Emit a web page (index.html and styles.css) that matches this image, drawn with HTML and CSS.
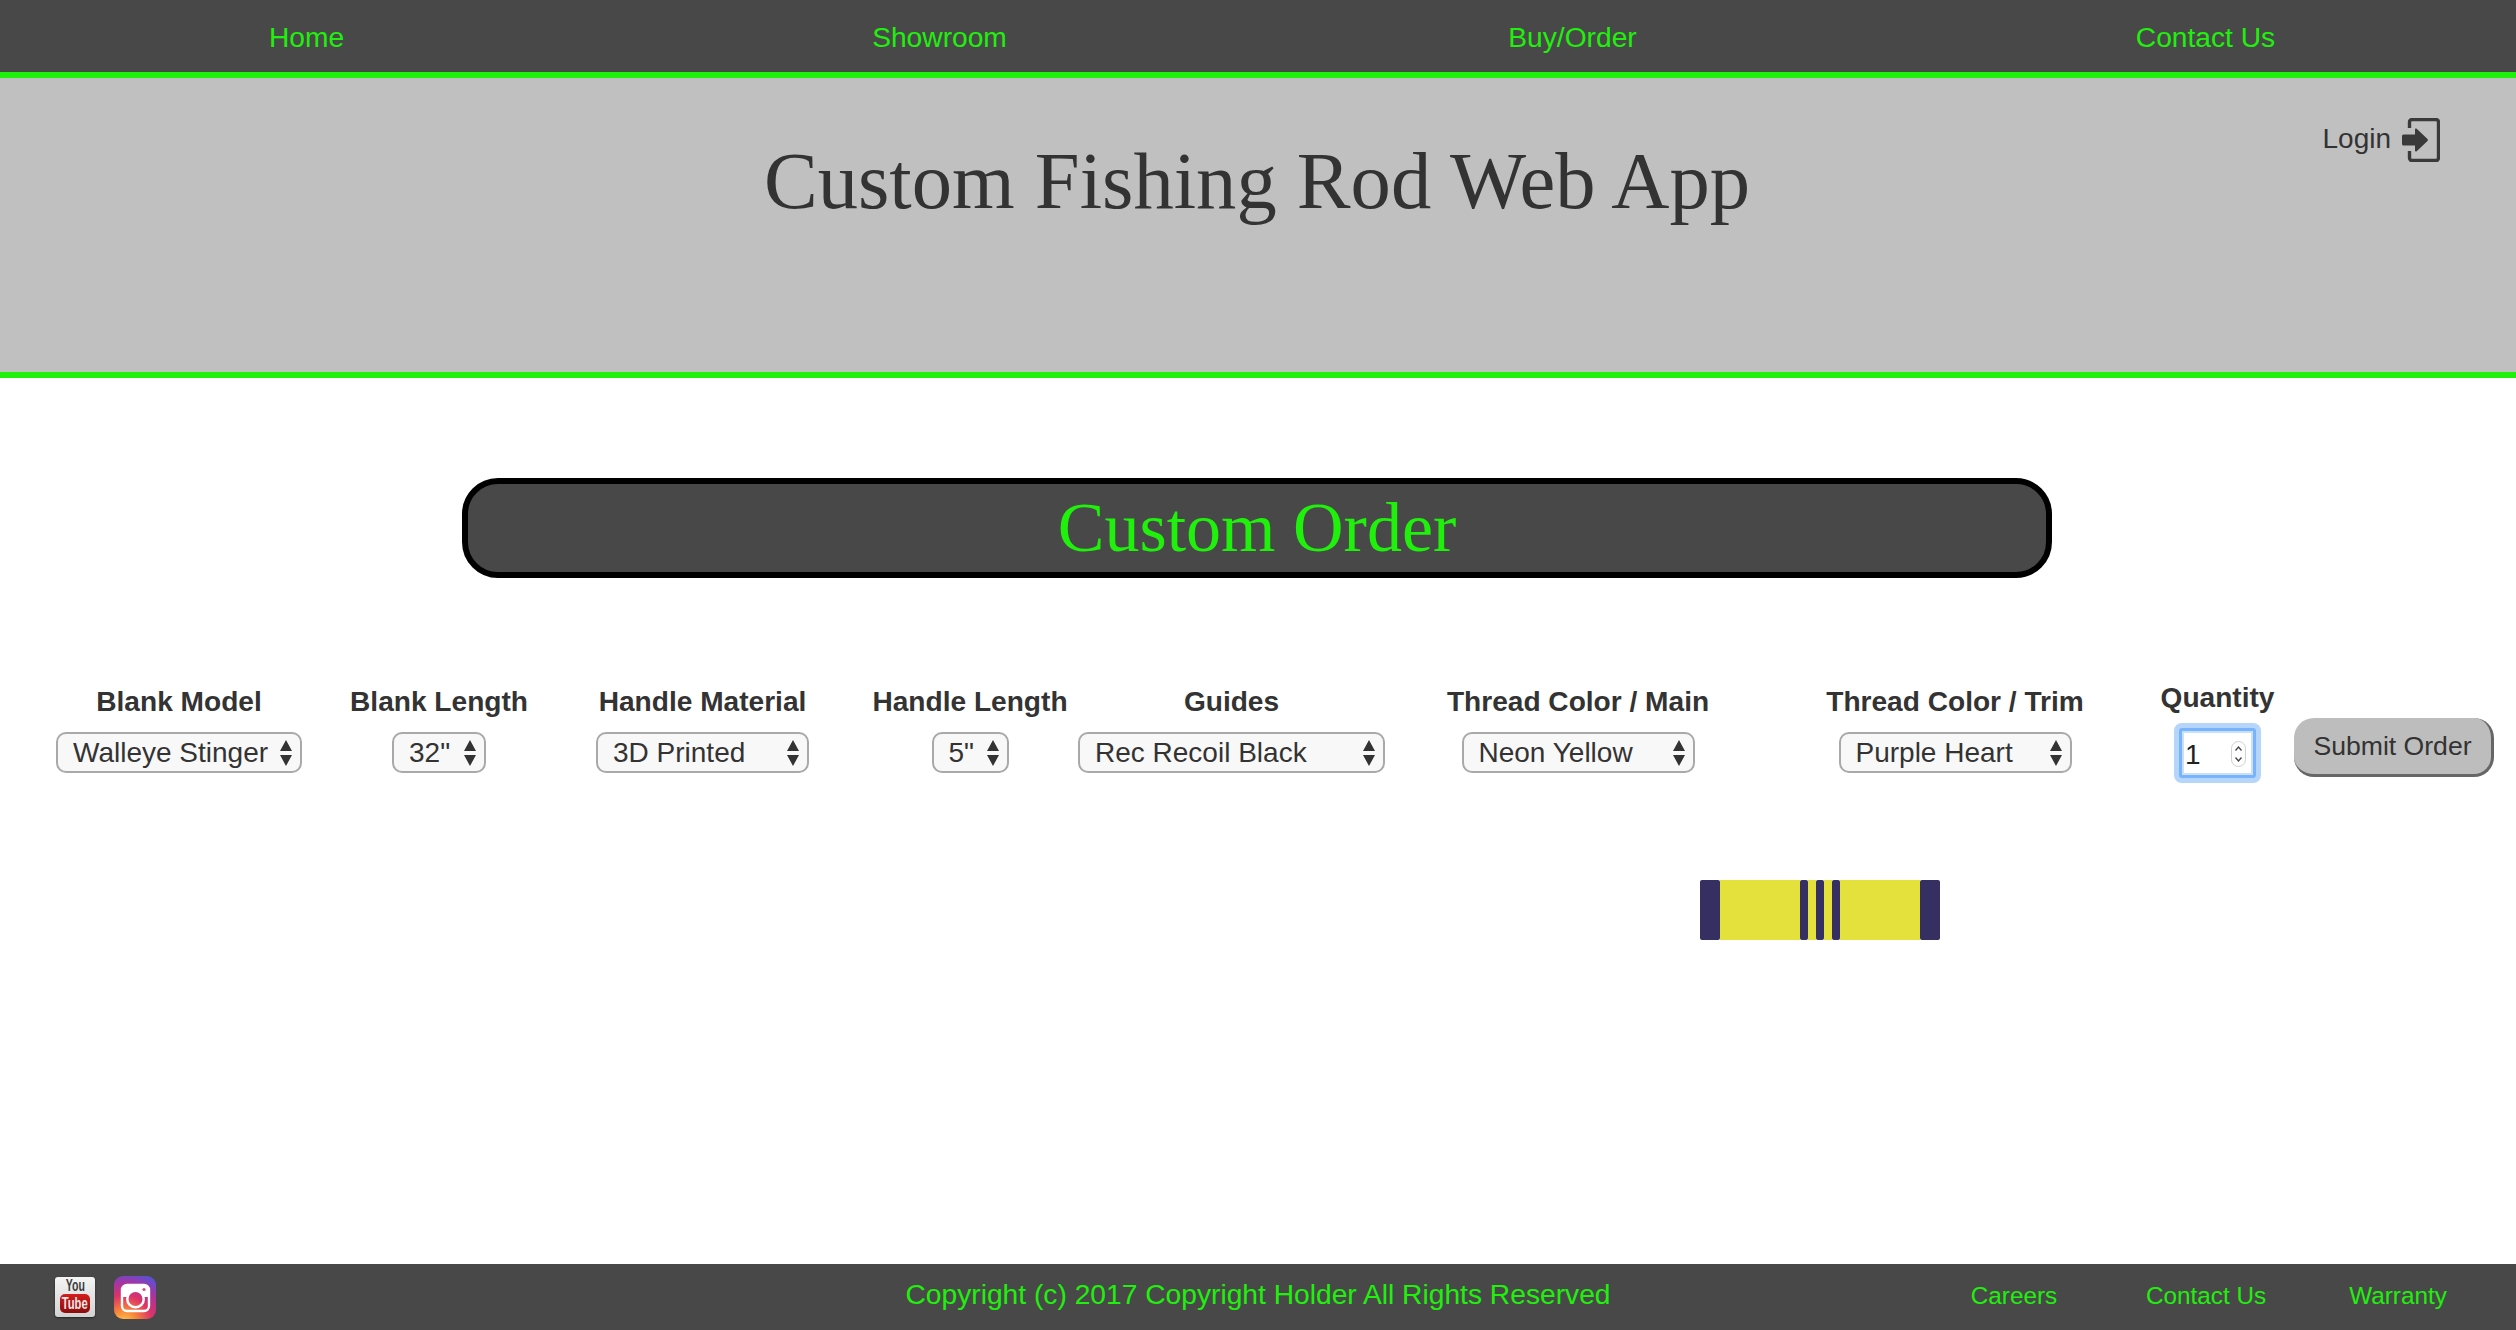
FILE: index.html
```html
<!DOCTYPE html>
<html lang="en">

<head>
    <meta charset="UTF-8">
    <title>Custom Fishing Rod Web App</title>
    <link rel="stylesheet" href="styles.css">
</head>

<body>

    <nav class="topnav">
        <a href="#">Home</a>
        <a href="#">Showroom</a>
        <a href="#">Buy/Order</a>
        <a href="#">Contact Us</a>
    </nav>

    <header class="banner">
        <h1>Custom Fishing Rod Web App</h1>
        <a class="login" href="#">
            Login
            <svg width="38" height="44" viewBox="0 0 38 44">
                <path d="M7.5 10V4a2.5 2.5 0 0 1 2.5-2.5h24a2.5 2.5 0 0 1 2.5 2.5v36a2.5 2.5 0 0 1-2.5 2.5H10A2.5 2.5 0 0 1 7.5 40v-7" fill="none" stroke="#3a3a3a" stroke-width="3.4"/>
                <path d="M1.5 16.5H13V11.5a1 1 0 0 1 1.7-.7L25.5 21a1.4 1.4 0 0 1 0 2L14.7 33.2a1 1 0 0 1-1.7-.7V27.5H1.5A1.5 1.5 0 0 1 0 26v-8a1.5 1.5 0 0 1 1.5-1.5z" fill="#3a3a3a"/>
            </svg>
        </a>
    </header>

    <main class="content">
        <h2 class="order-title">Custom Order</h2>

        <form class="order-form">
            <div class="field f1">
                <label for="model">Blank Model</label>
                <span class="pick w246">
                    <select id="model"><option>Walleye Stinger</option></select>
                    <svg class="updown" width="14" height="26" viewBox="0 0 14 26"><path d="M7 0l6 11H1zM7 26L1 15h12z"/></svg>
                </span>
            </div>
            <div class="field f2">
                <label for="blen">Blank Length</label>
                <span class="pick w94">
                    <select id="blen"><option>32"</option></select>
                    <svg class="updown" width="14" height="26" viewBox="0 0 14 26"><path d="M7 0l6 11H1zM7 26L1 15h12z"/></svg>
                </span>
            </div>
            <div class="field f3">
                <label for="hmat">Handle Material</label>
                <span class="pick w213">
                    <select id="hmat"><option>3D Printed</option></select>
                    <svg class="updown" width="14" height="26" viewBox="0 0 14 26"><path d="M7 0l6 11H1zM7 26L1 15h12z"/></svg>
                </span>
            </div>
            <div class="field f4">
                <label for="hlen">Handle Length</label>
                <span class="pick w77">
                    <select id="hlen"><option>5"</option></select>
                    <svg class="updown" width="14" height="26" viewBox="0 0 14 26"><path d="M7 0l6 11H1zM7 26L1 15h12z"/></svg>
                </span>
            </div>
            <div class="field f5">
                <label for="guides">Guides</label>
                <span class="pick w307">
                    <select id="guides"><option>Rec Recoil Black</option></select>
                    <svg class="updown" width="14" height="26" viewBox="0 0 14 26"><path d="M7 0l6 11H1zM7 26L1 15h12z"/></svg>
                </span>
            </div>
            <div class="field f6">
                <label for="tmain">Thread Color / Main</label>
                <span class="pick w233">
                    <select id="tmain"><option>Neon Yellow</option></select>
                    <svg class="updown" width="14" height="26" viewBox="0 0 14 26"><path d="M7 0l6 11H1zM7 26L1 15h12z"/></svg>
                </span>
            </div>
            <div class="field f7">
                <label for="ttrim">Thread Color / Trim</label>
                <span class="pick w233">
                    <select id="ttrim"><option>Purple Heart</option></select>
                    <svg class="updown" width="14" height="26" viewBox="0 0 14 26"><path d="M7 0l6 11H1zM7 26L1 15h12z"/></svg>
                </span>
            </div>
            <div class="field f8 qty-field">
                <label for="qty">Quantity</label>
                <span class="qty">
                    <input id="qty" type="text" value="1">
                    <svg class="stepper" width="15" height="26" viewBox="0 0 15 26">
                        <rect x=".5" y=".5" width="14" height="25" rx="7" fill="#fff" stroke="#cfcfcf"/>
                        <path d="M4.5 9.5L7.5 6l3 3.5M4.5 16.5l3 3.5 3-3.5" fill="none" stroke="#444" stroke-width="1.3"/>
                    </svg>
                </span>
            </div>
            <button class="submit" type="button">Submit Order</button>
        </form>

        <div class="swatch">
            <span class="navy wide"></span>
            <span class="yellow long"></span>
            <span class="navy"></span>
            <span class="yellow"></span>
            <span class="navy"></span>
            <span class="yellow"></span>
            <span class="navy"></span>
            <span class="yellow long"></span>
            <span class="navy wide"></span>
        </div>
    </main>

    <footer class="foot">
        <div class="social">
            <a class="yt" href="#">
                <span class="yt-you">You</span>
                <span class="yt-tube"><span>Tube</span></span>
            </a>
            <svg class="ig" width="42" height="43" viewBox="0 0 42 43">
                <defs>
                    <radialGradient id="igbg" gradientUnits="userSpaceOnUse" cx="10" cy="48" r="52">
                        <stop offset="0" stop-color="#fdd25a"/>
                        <stop offset="0.25" stop-color="#f88a38"/>
                        <stop offset="0.55" stop-color="#dc3268"/>
                        <stop offset="0.8" stop-color="#a534a4"/>
                        <stop offset="1" stop-color="#5f4fd0"/>
                    </radialGradient>
                </defs>
                <rect width="42" height="43" rx="9" fill="url(#igbg)"/>
                <rect x="8" y="9" width="27" height="26" rx="5" fill="none" stroke="#fff" stroke-width="2.4"/>
                <path d="M8 21v-7a5 5 0 0 1 5-5h17a5 5 0 0 1 5 5v7z" fill="#fff"/>
                <circle cx="21.5" cy="23" r="9.5" fill="#fff"/>
                <circle cx="21.5" cy="23" r="7" fill="url(#igbg)"/>
                <circle cx="30" cy="13.5" r="1.6" fill="#d84a80"/>
            </svg>
        </div>
        <p class="copy">Copyright (c) 2017 Copyright Holder All Rights Reserved</p>
        <div class="foot-links">
            <a href="#">Careers</a>
            <a href="#">Contact Us</a>
            <a href="#">Warranty</a>
        </div>
    </footer>

</body>

</html>
```

FILE: styles.css
```css
* {
    box-sizing: border-box;
}

body {
    margin: 0;
    height: 1330px;
    display: flex;
    flex-direction: column;
    overflow: hidden;
    font-family: "Liberation Sans", Arial, sans-serif;
    color: #333;
    background-color: #fff;
}

a {
    text-decoration: none;
}

.topnav {
    height: 78px;
    flex: none;
    display: grid;
    grid-template-columns: repeat(4, 633px);
    margin-left: -10px;
    margin-right: -6px;
    background-color: #484848;
    border-bottom: 6px solid #1ff00c;
}

.topnav a {
    text-align: center;
    line-height: 75px;
    font-size: 28.2px;
    color: #1ff00c;
}

.banner {
    height: 300px;
    flex: none;
    position: relative;
    background-color: #c0c0c0;
    border-bottom: 6px solid #1ff00c;
}

.banner h1 {
    margin: 0;
    padding: 59px 2px 0 0;
    text-align: center;
    font-family: "Liberation Serif", "Times New Roman", serif;
    font-weight: normal;
    font-size: 80.6px;
    line-height: 88px;
    color: #333;
}

.login {
    position: absolute;
    top: 38px;
    right: 76px;
    display: flex;
    align-items: center;
    gap: 11px;
    line-height: 40px;
    font-size: 28px;
    color: #333;
}

.login svg {
    margin-top: 2px;
}

.content {
    flex: 1;
}

.order-title {
    width: 1590px;
    height: 100px;
    margin: 100px 0 0 462px;
    text-align: center;
    font-family: "Liberation Serif", "Times New Roman", serif;
    font-weight: normal;
    font-size: 70px;
    line-height: 88px;
    color: #1ff00c;
    background-color: #484848;
    border: 6px solid #000;
    border-radius: 36px;
}

.order-form {
    display: flex;
    align-items: flex-start;
    margin-top: 105px;
    padding-left: 56px;
}

.field {
    display: flex;
    flex-direction: column;
    align-items: center;
}

.field label {
    height: 49px;
    line-height: 37px;
    white-space: nowrap;
    font-size: 28.1px;
    font-weight: bold;
    color: #333;
}

.f1 { width: 246px; }
.f2 { width: 176px; margin-left: 49px; }
.f3 { width: 213px; margin-left: 69px; }
.f4 { width: 194px; margin-left: 64px; }
.f5 { width: 307px; margin-left: 11px; }
.f6 { width: 266px; margin-left: 60px; }
.f7 { width: 256px; margin-left: 116px; }
.f8 { width: 111px; margin-left: 79px; }

.pick {
    position: relative;
    display: block;
    height: 41px;
}

.w246 { width: 246px; }
.w94 { width: 94px; }
.w213 { width: 213px; }
.w77 { width: 77px; }
.w307 { width: 307px; }
.w233 { width: 233px; }

.pick select {
    appearance: none;
    width: 100%;
    height: 100%;
    padding: 0 0 0 15px;
    font-family: "Liberation Sans", Arial, sans-serif;
    font-size: 28px;
    color: #333;
    background-color: #f8f8f8;
    border: 2px solid #a9a9a9;
    border-radius: 10px;
}

.updown {
    position: absolute;
    top: 8px;
    right: 9px;
    fill: #333;
}

.qty-field label {
    margin-top: -4px;
}

.qty {
    position: relative;
    display: block;
    width: 77px;
    height: 50px;
}

.qty input {
    width: 100%;
    height: 100%;
    padding: 3px 0 0 3px;
    font-family: "Liberation Sans", Arial, sans-serif;
    font-size: 28px;
    color: #222;
    background-color: #fff;
    border: 3px solid #78b4fb;
    border-radius: 3px;
    outline: none;
    box-shadow: 0 0 0 5px #b5d5fb, inset 0 0 0 2px #c8e0fc;
}

.stepper {
    position: absolute;
    top: 13px;
    right: 10px;
}

.submit {
    width: 200px;
    height: 59px;
    margin-top: 35px;
    margin-left: 21px;
    padding: 0;
    font-family: "Liberation Sans", Arial, sans-serif;
    font-size: 26.6px;
    color: #333;
    background-color: #bdbdbd;
    border: none;
    border-right: 3px solid #666;
    border-bottom: 3px solid #666;
    border-radius: 20px;
}

.swatch {
    display: flex;
    width: 240px;
    height: 60px;
    margin: 102px 0 0 1700px;
}

.swatch span {
    width: 8px;
}

.swatch .navy {
    background-color: #353061;
    border-radius: 2px;
}

.swatch .yellow {
    background-color: #e4e13d;
}

.swatch .wide {
    width: 20px;
}

.swatch .long {
    width: 80px;
}

.foot {
    height: 66px;
    flex: none;
    display: grid;
    grid-template-columns: 1fr auto 1fr;
    align-items: center;
    color: #1ff00c;
    background-color: #484848;
}

.social {
    display: flex;
    align-items: center;
    gap: 19px;
    padding-left: 55px;
}

.yt {
    width: 40px;
    height: 40px;
    display: flex;
    flex-direction: column;
    align-items: center;
    background: linear-gradient(#f4f4f4, #d2d2d2);
    border-radius: 3px;
    box-shadow: 0 1px 2px #222;
    font-weight: bold;
    font-size: 17px;
}

.yt-you {
    flex: none;
    height: 17px;
    line-height: 18px;
    color: #3c3c3c;
    transform: scaleX(0.62);
}

.yt-tube {
    width: 30px;
    height: 19px;
    display: flex;
    justify-content: center;
    line-height: 19px;
    color: #f2e6e6;
    background: linear-gradient(#d41e1e, #8a0c0c);
    border-radius: 5px;
}

.yt-tube span {
    flex: none;
    transform: scaleX(0.66);
}

.copy {
    margin: 0 0 5px;
    font-size: 28.2px;
    color: #1ff00c;
}

.foot-links {
    display: grid;
    grid-template-columns: repeat(3, 192px);
    justify-content: end;
    padding-right: 22px;
    padding-bottom: 2px;
}

.foot-links a {
    text-align: center;
    font-size: 24.3px;
    color: #1ff00c;
}
```
